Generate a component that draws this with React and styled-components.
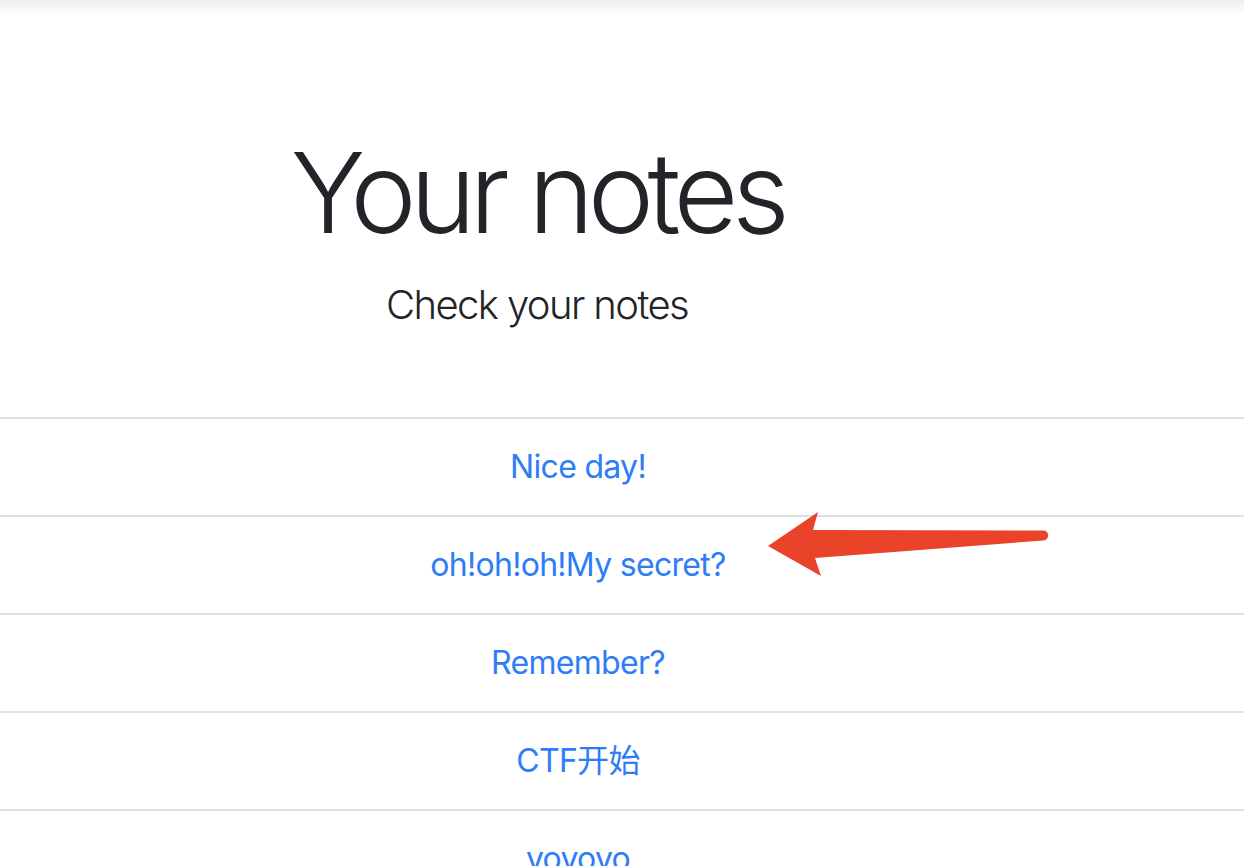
import styled, { createGlobalStyle } from "styled-components";

const GlobalStyle = createGlobalStyle`
  html, body {
    margin: 0;
    padding: 0;
    background: #fff;
    overflow: hidden;
  }
  body {
    font-family: Inter, "Noto Sans CJK SC", "Liberation Sans", sans-serif;
    color: #212529;
  }
`;

const Page = styled.div`
  position: relative;
  width: 100%;
  min-height: 866px;
`;

const NavShadow = styled.div`
  height: 14px;
  background: linear-gradient(to bottom, #eeeeee, rgba(255, 255, 255, 0));
`;

const Hero = styled.header`
  padding: 111px 170px 82px 0;
  text-align: center;
`;

const Title = styled.h1`
  margin: 0 0 16px;
  font-size: 112px;
  font-weight: 300;
  line-height: 1.2;
  letter-spacing: -6.5px;
  color: #212529;
`;

const Lead = styled.p`
  margin: 0;
  font-size: 40px;
  font-weight: 300;
  line-height: 1.5;
  letter-spacing: -1.6px;
  color: #212529;
`;

const NoteList = styled.ul`
  list-style: none;
  margin: 0;
  padding: 0;
`;

const NoteItem = styled.li`
  border-top: 2px solid #dfdfdf;
  padding: 24px 128px 24px 40px;
  text-align: center;
  font-size: 32px;
  line-height: 1.5;
  letter-spacing: -0.7px;
`;

const NoteLink = styled.a`
  color: #2f7df6;
  text-decoration: none;
`;

const Arrow = styled.svg`
  position: absolute;
  left: 760px;
  top: 505px;
  width: 300px;
  height: 90px;
  pointer-events: none;
`;

const notes = ["Nice day!", "oh!oh!oh!My secret?", "Remember?", "CTF开始", "yoyoyo"];

export default function App() {
  return (
    <Page>
      <GlobalStyle />
      <NavShadow />
      <Hero>
        <Title>Your notes</Title>
        <Lead>Check your notes</Lead>
      </Hero>
      <NoteList>
        {notes.map((note) => (
          <NoteItem key={note}>
            <NoteLink href="#">{note}</NoteLink>
          </NoteItem>
        ))}
      </NoteList>
      <Arrow viewBox="0 0 300 90">
        <path
          d="M8 41 L58 7 L53 25 L283 25.5 A5 5 0 0 1 283.5 35.5 L55 53 L61 71 Z"
          fill="#e9432a"
        />
      </Arrow>
    </Page>
  );
}
